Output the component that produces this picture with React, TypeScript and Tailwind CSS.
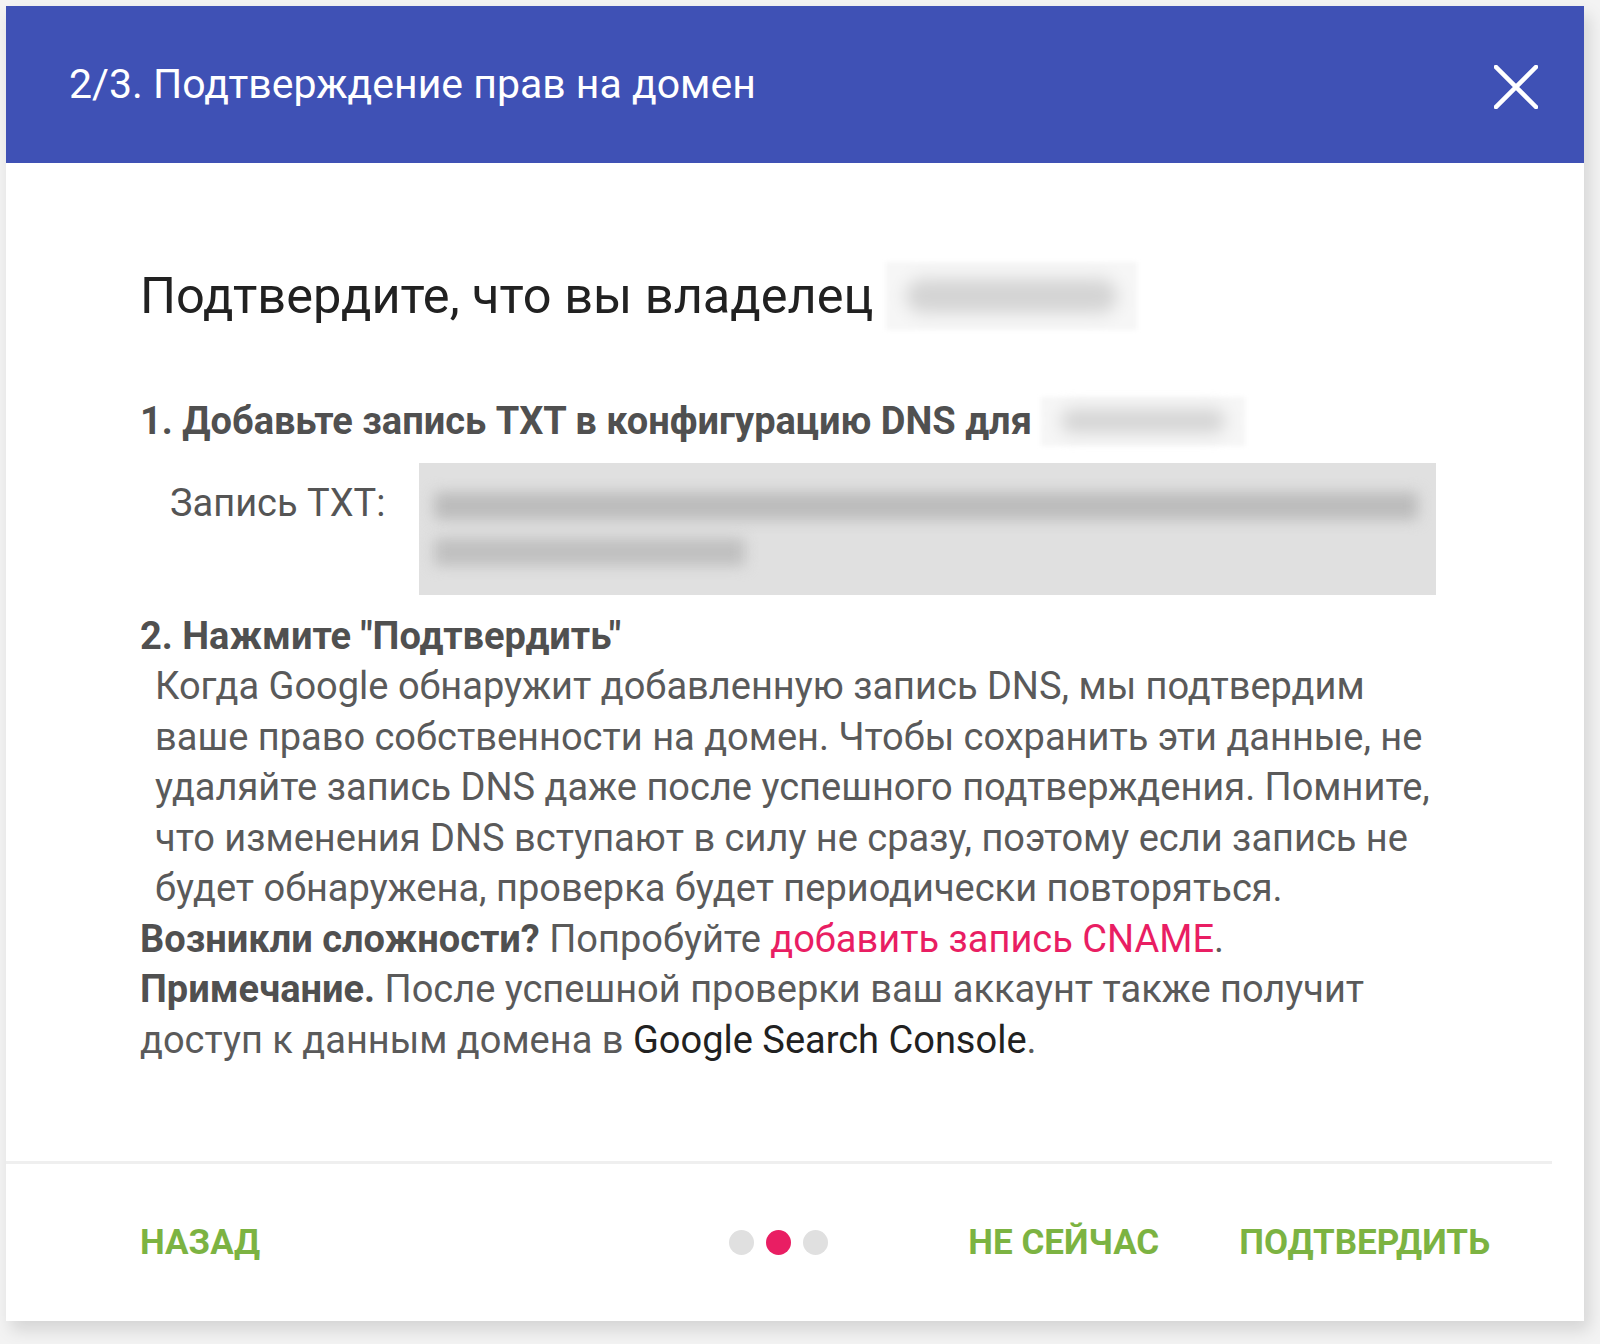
import React from "react";

const font = { fontFamily: "Roboto, 'Noto Sans', sans-serif" };

function Blur({ w, h, className = "" }: { w: number; h: number; className?: string }) {
  return (
    <span
      className={"inline-block align-middle bg-[#f6f6f6] blur-[2px] " + className}
      style={{ width: w, height: h }}
    >
      <span className="w-full h-full flex items-center px-5">
        <span className="block h-[50%] w-full rounded-full bg-[#d4d4d4] blur-[8px]" />
      </span>
    </span>
  );
}

export default function App() {
  return (
    <div className="min-h-[1344px] w-[1600px] bg-[#f3f3f3] pt-[6px] pl-[6px]" style={font}>
      <div className="w-[1578px] h-[1315px] bg-white shadow-[5px_9px_16px_rgba(0,0,0,0.13)] flex flex-col">
        {/* Header */}
        <div className="h-[157px] bg-[#3f51b5] flex items-center justify-between pl-[63px] pr-[46px] shrink-0">
          <div className="text-white text-[41px] leading-none">2/3. Подтверждение прав на домен</div>
          <svg width="44" height="44" viewBox="0 0 44 44" className="mt-[4px]">
            <path d="M2 2 L42 42 M42 2 L2 42" stroke="white" strokeWidth="4.5" strokeLinecap="square" />
          </svg>
        </div>

        {/* Body */}
        <div className="flex-1 pl-[134px] pr-[140px] pt-[96px]">
          <div className="flex items-center h-[74px]">
            <span className="text-[#212121] text-[50.5px] leading-none">Подтвердите, что вы владелец</span>
            <Blur w={251} h={68} className="ml-[13px]" />
          </div>

          <div className="mt-[63px] flex items-center h-[50px]">
            <span className="text-[#505050] text-[38px] font-bold leading-none">
              1. Добавьте запись TXT в конфигурацию DNS для
            </span>
            <Blur w={204} h={49} className="ml-[9px]" />
          </div>

          <div className="mt-[17px] flex">
            <div className="w-[279px] pl-[30px] pt-[21px] text-[#555] text-[38px] leading-none">Запись TXT:</div>
            <div className="w-[1017px] h-[132px] bg-[#e0e0e0] pl-[15px] pr-[18px] pt-[22px]">
              <div className="h-[42px] w-full flex items-center">
                <div className="h-[28px] w-full bg-[#bcbcbc] blur-[7px] rounded" />
              </div>
              <div className="h-[50px] w-[311px] flex items-center">
                <div className="h-[28px] w-full bg-[#c0c0c0] blur-[7px] rounded" />
              </div>
            </div>
          </div>

          <div className="mt-[16px] text-[#505050] text-[38px] font-bold leading-[50px]">
            2. Нажмите "Подтвердить"
          </div>
          <div className="pl-[15px] text-[#5a5a5a] text-[38px] leading-[50.5px]">
            <div>Когда Google обнаружит добавленную запись DNS, мы подтвердим</div>
            <div>ваше право собственности на домен. Чтобы сохранить эти данные, не</div>
            <div>удаляйте запись DNS даже после успешного подтверждения. Помните,</div>
            <div>что изменения DNS вступают в силу не сразу, поэтому если запись не</div>
            <div>будет обнаружена, проверка будет периодически повторяться.</div>
          </div>
          <div className="text-[#5a5a5a] text-[38px] leading-[50.5px]">
            <div>
              <span className="font-bold text-[#505050]">Возникли сложности?</span> Попробуйте{" "}
              <span className="text-[#e91e63]">добавить запись CNAME</span>.
            </div>
            <div>
              <span className="font-bold text-[#505050]">Примечание.</span> После успешной проверки ваш аккаунт также получит
            </div>
            <div>
              доступ к данным домена в <span className="text-[#212121]">Google Search Console</span>.
            </div>
          </div>
        </div>

        {/* Divider */}
        <div className="h-[3px] w-[1546px] bg-[#efefef] shrink-0" />

        {/* Footer */}
        <div className="h-[157px] shrink-0 flex items-center pl-[134px] pr-[94px]">
          <span className="text-[#7cb342] text-[35px] font-bold leading-none">НАЗАД</span>
          <div className="ml-auto flex items-center gap-[12px]">
            <span className="w-[25px] h-[25px] rounded-full bg-[#e0e0e0]" />
            <span className="w-[25px] h-[25px] rounded-full bg-[#e91e63]" />
            <span className="w-[25px] h-[25px] rounded-full bg-[#e0e0e0]" />
          </div>
          <span className="ml-[140px] text-[#7cb342] text-[35px] font-bold leading-none">НЕ СЕЙЧАС</span>
          <span className="ml-[80px] text-[#7cb342] text-[35px] font-bold leading-none">ПОДТВЕРДИТЬ</span>
        </div>
      </div>
    </div>
  );
}
